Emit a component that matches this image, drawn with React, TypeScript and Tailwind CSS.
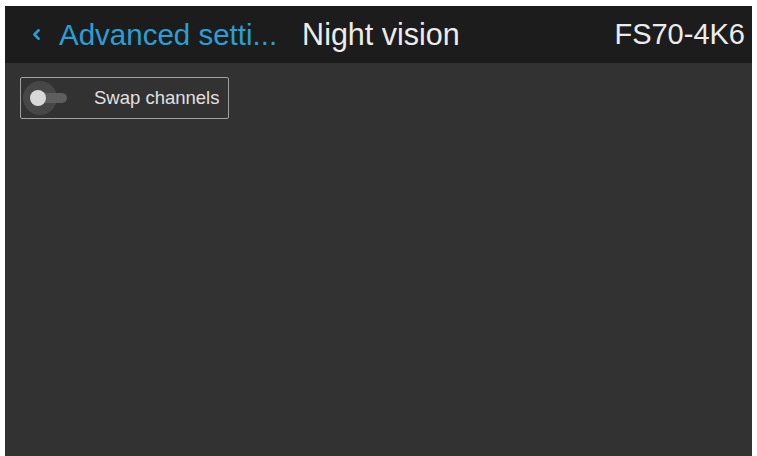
import { ChevronLeft } from "lucide-react";

export default function App() {
  return (
    <div
      className="w-[757px] h-[456px] bg-white pt-[6px] pl-[5px] pr-[5px] overflow-hidden"
      style={{ fontFamily: "'Liberation Sans', Arial, sans-serif" }}
    >
      <div className="h-full flex flex-col bg-[#323232]">
        {/* header */}
        <div className="h-[57px] bg-[#1c1c1c] flex items-center pl-[23px] pr-[7px]">
          <ChevronLeft size={17} strokeWidth={3.5} className="text-[#2a9fd6]" />
          <span className="ml-[14px] text-[29.5px] text-[#2a9fd6] leading-none">Advanced setti...</span>
          <span className="ml-[25px] text-[30.5px] text-[#ececec] leading-none">Night vision</span>
          <span className="ml-auto text-[29px] text-[#ececec] leading-none">FS70-4K6</span>
        </div>

        {/* content */}
        <div className="pt-[14px] pl-[15px]">
          <div className="w-[209px] h-[42px] border border-[#a0a0a0] rounded-[2px] flex items-center">
            <div className="relative w-[46px] h-[36px] ml-[1px]">
              <div className="absolute left-[1px] top-[1px] w-[34px] h-[34px] rounded-full bg-[#474747]" />
              <div className="absolute left-[15px] top-[13px] w-[30px] h-[10px] rounded-full bg-[#5e5e5e]" />
              <div className="absolute left-[8px] top-[10px] w-[16px] h-[16px] rounded-full bg-[#d8d8d8]" />
            </div>
            <span className="ml-[26px] text-[18.5px] text-[#e0e0e0] leading-none">Swap channels</span>
          </div>
        </div>
      </div>
    </div>
  );
}
